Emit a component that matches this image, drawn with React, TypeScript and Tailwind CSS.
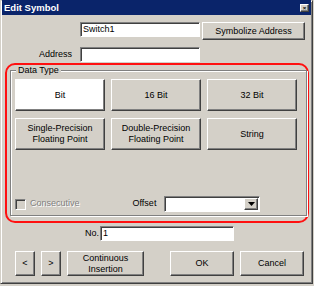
import React from 'react';

const raised =
  'border border-t-white border-l-white border-r-[#404040] border-b-[#404040] shadow-[inset_-1px_-1px_0_#808080]';
const sunken =
  'border border-t-[#808080] border-l-[#808080] border-r-white border-b-white shadow-[inset_1px_1px_0_#404040]';

function Btn({ children, className = '', white = false }: { children: React.ReactNode; className?: string; white?: boolean }) {
  return (
    <div
      className={`${raised} ${white ? 'bg-white' : 'bg-[#d4d0c8]'} flex items-center justify-center text-center leading-[11px] text-black ${className}`}
    >
      {children}
    </div>
  );
}

function Field({ value = '', className = '' }: { value?: string; className?: string }) {
  return (
    <div className={`${sunken} bg-white pl-[2px] flex items-center leading-none text-black ${className}`}>{value}</div>
  );
}

export default function App() {
  return (
    <div className="w-[314px] h-[286px] bg-[#d4d0c8] font-['Liberation_Sans',Arial,sans-serif] text-[9px] text-black">
      <div className="w-[313px] h-[284px] border border-t-[#d4d0c8] border-l-[#d4d0c8] border-r-[#404040] border-b-[#404040] shadow-[inset_1px_1px_0_#fff,inset_-1px_-1px_0_#808080] flex flex-col">
        {/* title bar */}
        <div className="h-[15px] mx-[1px] mt-[-1px] bg-[#0a246a] flex items-center justify-between pl-[2px] pr-[2px]">
          <span className="text-white font-bold text-[9.5px] leading-none">Edit Symbol</span>
          <div className={`${raised} w-[9px] h-[8px] bg-[#d4d0c8] flex items-center justify-center text-[6px] leading-none font-bold`}>
            ×
          </div>
        </div>

        {/* name row */}
        <div className="flex items-start mt-[7px] pl-[79px]">
          <Field value="Switch1" className="w-[120px] h-[15px]" />
          <Btn className="ml-[2px] w-[103px] h-[18px]">Symbolize Address</Btn>
        </div>

        {/* address row */}
        <div className="flex items-center mt-[7px]">
          <span className="w-[71px] text-right">Address</span>
          <Field className="ml-[8px] w-[120px] h-[15px]" />
        </div>

        {/* highlighted data type group */}
        <div className="mt-[1px] ml-[4px] w-[304px] h-[160px] border-2 border-[#ff1010] rounded-[10px] pl-[3px] pt-[5px]">
          <div className="relative w-[297px] h-[146px] border border-[#808080] shadow-[inset_1px_1px_0_#fff,1px_1px_0_#fff] flex flex-col px-[4px] pt-[8px]">
            <span className="absolute left-[5px] top-[-6px] bg-[#d4d0c8] px-[2px] leading-[11px]">Data Type</span>
            <div className="grid grid-cols-[90px_90px_90px] gap-x-[6px] gap-y-[7px]">
              <Btn white className="h-[32px]">Bit</Btn>
              <Btn className="h-[32px]">16 Bit</Btn>
              <Btn className="h-[32px]">32 Bit</Btn>
              <Btn className="h-[32px]">
                Single-Precision
                <br />
                Floating Point
              </Btn>
              <Btn className="h-[32px]">
                Double-Precision
                <br />
                Floating Point
              </Btn>
              <Btn className="h-[32px]">String</Btn>
            </div>
            <div className="mt-auto mb-[3px] flex items-center h-[16px]">
              <div className={`${sunken} w-[11px] h-[11px] bg-[#d4d0c8]`} />
              <span className="ml-[4px] text-[#808080] [text-shadow:1px_1px_0_#fff]">Consecutive</span>
              <span className="ml-[53px]">Offset</span>
              <div className={`${sunken} ml-[8px] w-[96px] h-[16px] bg-white flex justify-end p-[1px]`}>
                <div className={`${raised} w-[14px] h-full bg-[#d4d0c8] flex items-center justify-center`}>
                  <svg width="7" height="4" viewBox="0 0 7 4">
                    <path d="M0 0h7L3.5 4z" fill="#000" />
                  </svg>
                </div>
              </div>
            </div>
          </div>
        </div>

        {/* no. row */}
        <div className="flex items-center mt-[3px]">
          <span className="w-[98px] text-right">No.</span>
          <Field value="1" className="ml-[1px] w-[134px] h-[15px]" />
        </div>

        {/* bottom buttons */}
        <div className="flex mt-[10px] pl-[14px]">
          <Btn className="w-[20px] h-[25px]">&lt;</Btn>
          <Btn className="ml-[6px] w-[20px] h-[25px]">&gt;</Btn>
          <Btn className="ml-[6px] w-[77px] h-[25px]">
            Continuous
            <br />
            Insertion
          </Btn>
          <Btn className="ml-[26px] w-[64px] h-[25px]">OK</Btn>
          <Btn className="ml-[6px] w-[64px] h-[25px]">Cancel</Btn>
        </div>
      </div>
    </div>
  );
}
